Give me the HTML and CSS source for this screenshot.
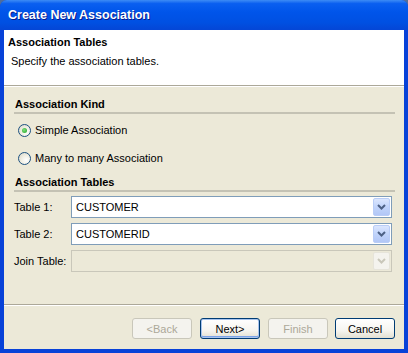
FILE: index.html
```html
<!DOCTYPE html>
<html lang="en">
<head>
    <meta charset="UTF-8">
    <title>Create New Association</title>
    <link rel="stylesheet" href="styles.css">
</head>
<body>
    <div class="window">
        <div class="titlebar">Create New Association</div>
        <div class="client">
            <div class="banner">
                <div class="banner-title">Association Tables</div>
                <div class="banner-text">Specify the association tables.</div>
            </div>

            <div class="content">
                <div class="group-title first">Association Kind</div>
                <div class="radio-group">
                    <label class="radio-row">
                        <span class="radio checked"></span>
                        <span>Simple Association</span>
                    </label>
                    <label class="radio-row">
                        <span class="radio"></span>
                        <span>Many to many Association</span>
                    </label>
                </div>

                <div class="group-title second">Association Tables</div>
                <div class="field-row">
                    <span class="field-label">Table 1:</span>
                    <div class="combo">
                        <span class="combo-value">CUSTOMER</span>
                        <span class="combo-btn">
                            <svg width="9" height="6" viewBox="0 0 9 6"><path d="M1 1 L4.5 4.5 L8 1" fill="none" stroke="currentColor" stroke-width="2"/></svg>
                        </span>
                    </div>
                </div>
                <div class="field-row">
                    <span class="field-label">Table 2:</span>
                    <div class="combo">
                        <span class="combo-value">CUSTOMERID</span>
                        <span class="combo-btn">
                            <svg width="9" height="6" viewBox="0 0 9 6"><path d="M1 1 L4.5 4.5 L8 1" fill="none" stroke="currentColor" stroke-width="2"/></svg>
                        </span>
                    </div>
                </div>
                <div class="field-row">
                    <span class="field-label">Join Table:</span>
                    <div class="combo disabled">
                        <span class="combo-value"></span>
                        <span class="combo-btn">
                            <svg width="9" height="6" viewBox="0 0 9 6"><path d="M1 1 L4.5 4.5 L8 1" fill="none" stroke="currentColor" stroke-width="2"/></svg>
                        </span>
                    </div>
                </div>
            </div>

            <div class="footer">
                <button class="btn" disabled>&lt;Back</button>
                <button class="btn default">Next&gt;</button>
                <button class="btn" disabled>Finish</button>
                <button class="btn cancel">Cancel</button>
            </div>
        </div>
    </div>
</body>
</html>
```

FILE: styles.css
```css
body {
    margin: 0;
    background-color: #4f6d9c;
    font-family: "Liberation Sans", Arial, sans-serif;
    font-size: 11px;
    color: #000;
}
.window {
    width: 408px;
    height: 353px;
    display: flex;
    flex-direction: column;
    background-color: #0842d8;
    border-radius: 7px 7px 0 0;
    box-sizing: border-box;
    overflow: hidden;
}
.titlebar {
    height: 30px;
    flex: none;
    padding-left: 8px;
    line-height: 31px;
    font-size: 12.5px;
    font-weight: bold;
    color: white;
    text-shadow: 1px 1px 0 #0a1a8a;
    background: linear-gradient(to bottom, #3d8cf5 0%, #0a5ff0 12%, #0055ea 40%, #0050e2 75%, #0446d6 100%);
}
.client {
    flex: 1;
    margin: 0 4px 4px 4px;
    background-color: #ece9d8;
    display: flex;
    flex-direction: column;
}
.banner {
    height: 56px;
    background-color: white;
    border-bottom: 1px solid #aca899;
    box-shadow: 0 1px 0 white;
    padding: 5px 0 0 4px;
    box-sizing: border-box;
}
.banner-title {
    font-weight: bold;
    line-height: 14px;
}
.banner-text {
    margin-top: 5px;
    padding-left: 3px;
    line-height: 14px;
}
.content {
    flex: 1;
    padding: 0 9px 0 10px;
}
.group-title {
    font-weight: bold;
    line-height: 14px;
    padding-left: 1px;
    padding-bottom: 1px;
    border-bottom: 2px solid #c4c2b4;
}
.group-title.first {
    margin-top: 11px;
}
.group-title.second {
    margin-top: 3px;
}
.radio-group {
    margin-top: 2px;
}
.radio-row {
    height: 28px;
    display: flex;
    align-items: center;
    padding-left: 4px;
}
.radio {
    width: 11px;
    height: 11px;
    border: 1px solid #1c5180;
    border-radius: 50%;
    background: radial-gradient(circle at 65% 65%, #ffffff 0%, #f1efe4 45%, #d6d3c4 100%);
    margin-right: 4px;
    display: flex;
    align-items: center;
    justify-content: center;
}
.radio.checked::after {
    content: "";
    width: 5px;
    height: 5px;
    border-radius: 50%;
    background: radial-gradient(circle at 40% 40%, #7ee07e, #21a121);
}
.field-row {
    display: flex;
    align-items: center;
    margin-top: 5px;
}
.group-title.second + .field-row {
    margin-top: 4px;
}
.field-label {
    width: 57px;
    flex: none;
}
.combo {
    flex: 1;
    height: 22px;
    margin-right: 3px;
    border: 1px solid #7f9db9;
    background-color: white;
    box-sizing: border-box;
    display: flex;
    align-items: center;
    padding: 1px;
}
.combo-value {
    flex: 1;
    padding-left: 3px;
}
.combo-btn {
    width: 17px;
    height: 18px;
    box-sizing: border-box;
    border: 1px solid #b9cdf7;
    border-radius: 2px;
    background: linear-gradient(to bottom, #dbe6fe 0%, #c1d4fb 50%, #b2c7f6 100%);
    color: #4d6185;
    display: flex;
    align-items: center;
    justify-content: center;
}
.combo.disabled {
    background-color: #ece9d8;
    border-color: #c9c7ba;
}
.combo.disabled .combo-btn {
    background: #f4f3ee;
    border-color: #e6e4da;
    color: #c9c7ba;
}
.footer {
    height: 45px;
    flex: none;
    box-sizing: border-box;
    border-top: 1px solid #aca899;
    box-shadow: inset 0 1px 0 white;
    display: flex;
    justify-content: flex-end;
    align-items: flex-start;
    padding: 13px 9px 0 0;
}
.btn {
    width: 60px;
    height: 21px;
    margin-left: 8px;
    padding: 0;
    font-family: "Liberation Sans", Arial, sans-serif;
    font-size: 11px;
    color: #000;
    border: 1px solid #003c74;
    border-radius: 3px;
    background: linear-gradient(to bottom, #ffffff 0%, #f6f5f0 60%, #e3e0d2 100%);
}
.btn.default {
    box-shadow: inset 0 0 0 1px #a8c4ee, inset 0 -1px 0 1px #7ba2e7;
}
.btn.cancel {
    margin-left: 7px;
}
.btn:disabled {
    color: #aca899;
    border-color: #c9c7ba;
    background: #f4f3ee;
}
```
